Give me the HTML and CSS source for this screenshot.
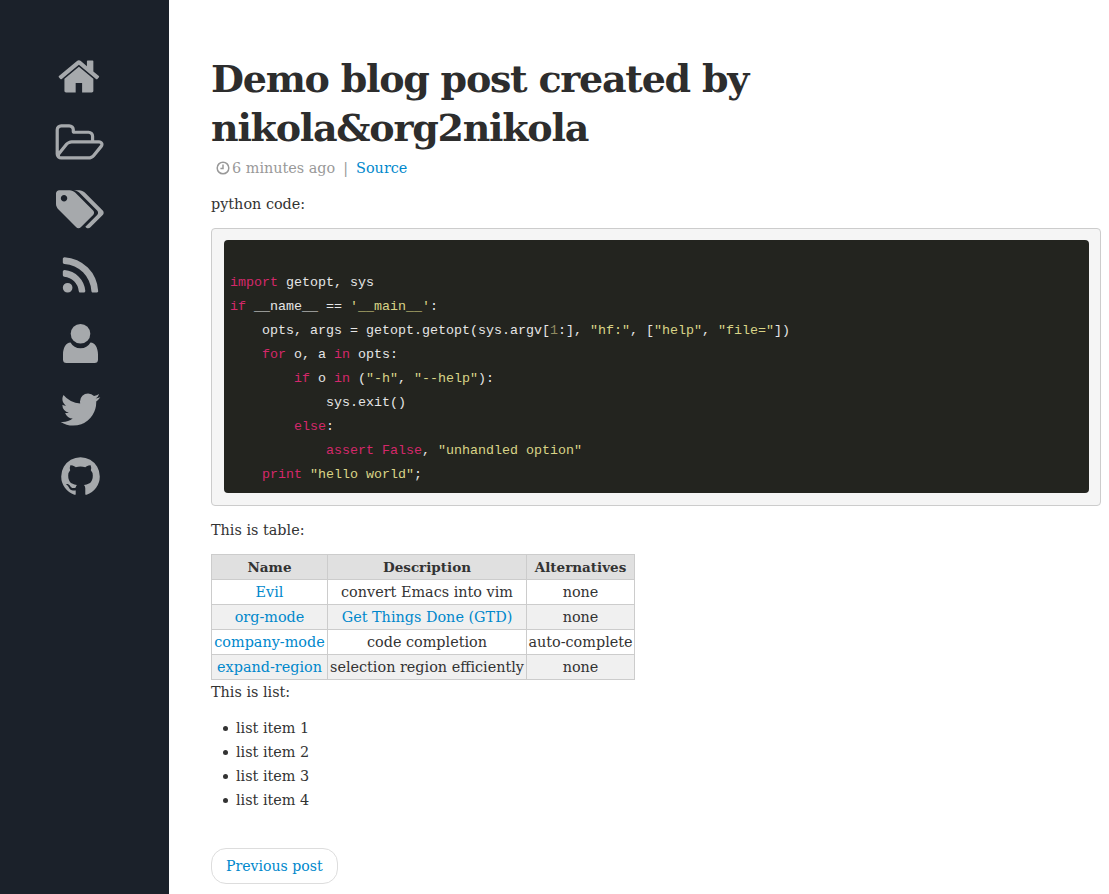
FILE: index.html
```html
<!DOCTYPE html>
<html lang="en">
<head>
<meta charset="utf-8">
<title>Demo blog post created by nikola&amp;org2nikola</title>
<link rel="stylesheet" href="styles.css">
</head>
<body>
<div class="layout">
  <nav class="sidebar">
    <a class="nav-item" href="#"><svg class="icon" viewBox="0 0 1792 1792"><path d="M1408 992v480q0 26-19 45t-45 19h-384v-384h-256v384h-384q-26 0-45-19t-19-45v-480q0-1 .5-3t.5-3l575-474 575 474q1 2 1 6zm223-69l-62 74q-8 9-21 11h-3q-13 0-21-7l-692-577-692 577q-12 8-24 7-13-2-21-11l-62-74q-8-10-7-23.5t11-21.5l719-599q32-26 76-26t76 26l244 204v-195q0-14 9-23t23-9h192q14 0 23 9t9 23v408l219 182q10 8 11 21.5t-7 23.5z"/></svg></a>
    <a class="nav-item" href="#"><svg class="icon" viewBox="0 0 2048 1792"><path d="M1845 931q0-35-53-35h-1088q-40 0-85.5 21.5t-71.5 52.5l-294 363q-18 24-18 40 0 35 53 35h1088q40 0 86-22t71-53l294-363q18-22 18-39zm-1141-163h768v-160q0-40-28-68t-68-28h-576q-40 0-68-28t-28-68v-64q0-40-28-68t-68-28h-320q-40 0-68 28t-28 68v853l256-315q44-53 116-87.5t140-34.5zm1269 163q0 62-46 120l-295 363q-43 53-116 87.5t-140 34.5h-1088q-92 0-158-66t-66-158v-960q0-92 66-158t158-66h320q92 0 158 66t66 158v32h544q92 0 158 66t66 158v160h192q54 0 99 24.5t67 70.5q15 32 15 68z"/></svg></a>
    <a class="nav-item" href="#"><svg class="icon" viewBox="0 0 1920 1792"><path d="M448 448q0-53-37.5-90.5t-90.5-37.5-90.5 37.5-37.5 90.5 37.5 90.5 90.5 37.5 90.5-37.5 37.5-90.5zm1067 576q0 53-37 90l-491 492q-39 37-91 37-53 0-90-37l-715-716q-38-37-64.5-101t-26.5-117v-416q0-52 38-90t90-38h416q53 0 117 26.5t102 64.5l715 714q37 39 37 91zm384 0q0 53-37 90l-491 492q-39 37-91 37-36 0-59-14t-53-45l470-470q37-37 37-90 0-52-37-91l-715-714q-38-38-102-64.5t-117-26.5h224q53 0 117 26.5t102 64.5l715 714q37 39 37 91z"/></svg></a>
    <a class="nav-item" href="#"><svg class="icon" viewBox="0 0 1792 1792"><path d="M576 1344q0 80-56 136t-136 56-136-56-56-136 56-136 136-56 136 56 56 136zm512 123q2 28-17 48-18 21-47 21h-135q-25 0-43-16.5t-20-41.5q-22-229-184.5-391.5t-391.5-184.5q-25-2-41.5-20t-16.5-43v-135q0-29 21-47 17-17 43-17h5q160 13 306 80.5t259 181.5q114 113 181.5 259t80.5 306zm512 2q2 27-18 47-18 20-46 20h-143q-26 0-44.5-17.5t-19.5-42.5q-12-215-101-408.5t-231.5-336-336-231.5-408.5-102q-25-1-42.5-19.5t-17.5-43.5v-143q0-28 20-46 18-18 44-18h3q262 13 501.5 120t425.5 294q187 186 294 425.5t120 501.5z"/></svg></a>
    <a class="nav-item" href="#"><svg class="icon-user" viewBox="0 0 35 39"><circle cx="17.5" cy="9.8" r="9.8"/><path d="M7.5 18.5A11.5 11.5 0 0 0 27.5 18.5C32 18.5 35 24 35 30.5V35.5Q35 39 31.5 39H3.5Q0 39 0 35.5V30.5C0 24 3 18.5 7.5 18.5Z"/></svg></a>
    <a class="nav-item" href="#"><svg class="icon" viewBox="0 0 1792 1792"><path d="M1684 408q-67 98-162 167 1 14 1 42 0 130-38 259.5t-115.5 248.5-184.5 210.5-258 146-323 54.5q-271 0-496-145 35 4 78 4 225 0 401-138-105-2-188-64.5t-114-159.5q33 5 61 5 43 0 85-11-112-23-185.5-111.5t-73.5-205.5v-4q68 38 146 41-66-44-105-115t-39-154q0-88 44-163 121 149 294.5 238.5t371.5 99.5q-8-38-8-74 0-134 94.5-228.5t228.5-94.5q140 0 236 102 109-21 205-78-37 115-142 178 92-10 184-50z"/></svg></a>
    <a class="nav-item" href="#"><svg class="icon" viewBox="0 0 1792 1792"><path d="M896 128q209 0 385.5 103t279.5 279.5 103 385.5q0 251-146.5 451.5t-378.5 277.5q-27 5-40-7t-13-30q0-3 .5-76.5t.5-134.5q0-97-52-142 57-6 102.5-18t94-39 81-66.5 53-105 20.5-150.5q0-119-79-206 37-91-8-204-28-9-81 11t-92 44l-38 24q-93-26-192-26t-192 26q-16-11-42.5-27t-83.5-38.5-85-13.5q-45 113-8 204-79 87-79 206 0 85 20.5 150t52.5 105 80.5 67 94 39 102.5 18q-39 36-49 103-21 10-45 15t-57 5-65.5-21.5-55.5-62.5q-19-32-48.5-52t-49.5-24l-20-3q-21 0-29 4.5t-5 11.5 9 14 13 12l7 5q22 10 43.5 38t31.5 51l10 23q13 38 44 61.5t67 30 69.5 7 55.5-3.5l23-4q0 38 .5 88.5t.5 54.5q0 18-13 30t-40 7q-232-77-378.5-277.5t-146.5-451.5q0-209 103-385.5t279.5-279.5 385.5-103z"/></svg></a>
  </nav>
  <main class="content">
    <h1 class="title">Demo blog post created by<br>nikola&amp;org2nikola</h1>
    <div class="meta">
      <svg class="clock" viewBox="0 0 14 14"><circle cx="7" cy="7" r="5.8"/><path d="M7 3.5V7.6H4.4"/></svg>
      <span class="time">6 minutes ago</span>
      <span class="sep">|</span>
      <a href="#">Source</a>
    </div>
    <p class="para first">python code:</p>
    <div class="code-box">
      <div class="code">
        <div class="line"> </div>
        <div class="line"><span class="k">import</span> getopt, sys</div>
        <div class="line"><span class="k">if</span> __name__ == <span class="s">'__main__'</span>:</div>
        <div class="line">    opts, args = getopt.getopt(sys.argv[<span class="n">1</span>:], <span class="s">"hf:"</span>, [<span class="s">"help"</span>, <span class="s">"file="</span>])</div>
        <div class="line">    <span class="k">for</span> o, a <span class="k">in</span> opts:</div>
        <div class="line">        <span class="k">if</span> o <span class="k">in</span> (<span class="s">"-h"</span>, <span class="s">"--help"</span>):</div>
        <div class="line">            sys.exit()</div>
        <div class="line">        <span class="k">else</span>:</div>
        <div class="line">            <span class="k">assert</span> <span class="k">False</span>, <span class="s">"unhandled option"</span></div>
        <div class="line">    <span class="k">print</span> <span class="s">"hello world"</span>;</div>
      </div>
    </div>
    <p class="para table-label">This is table:</p>
    <table class="data">
      <colgroup><col class="c1"><col class="c2"><col class="c3"></colgroup>
      <thead><tr><th>Name</th><th>Description</th><th>Alternatives</th></tr></thead>
      <tbody>
        <tr><td><a href="#">Evil</a></td><td>convert Emacs into vim</td><td>none</td></tr>
        <tr><td><a href="#">org-mode</a></td><td><a href="#">Get Things Done (GTD)</a></td><td>none</td></tr>
        <tr><td><a href="#">company-mode</a></td><td>code completion</td><td>auto-complete</td></tr>
        <tr><td><a href="#">expand-region</a></td><td>selection region efficiently</td><td>none</td></tr>
      </tbody>
    </table>
    <p class="para list-label">This is list:</p>
    <ul class="list">
      <li>list item 1</li>
      <li>list item 2</li>
      <li>list item 3</li>
      <li>list item 4</li>
    </ul>
    <a class="pager" href="#">Previous post</a>
  </main>
</div>
</body>
</html>
```
FILE: styles.css
```css
* { box-sizing: border-box; }
html, body { margin: 0; padding: 0; background: #fff; }
body {
  font-family: "DejaVu Serif", serif;
  font-size: 14.4px;
  line-height: 24px;
  color: #333;
  height: 894px;
  overflow: hidden;
}
a { color: #0088cc; text-decoration: none; }
.layout { display: flex; height: 894px; }
.sidebar {
  width: 169px;
  flex: none;
  background: #1b212a;
  display: flex;
  flex-direction: column;
  align-items: center;
  padding: 43px 9px 0 0;
}
.nav-item { height: 66.7px; display: flex; align-items: center; justify-content: center; }
.icon { height: 45px; width: auto; fill: #a6a9ac; display: block; }
.icon-user { width: 35px; height: 39px; fill: #a6a9ac; display: block; }
.content { flex: 1; padding: 54px 8px 0 42px; min-width: 0; }
.title {
  margin: 0;
  font-size: 38px;
  line-height: 49px;
  font-weight: 700;
  letter-spacing: -1.25px;
  color: #2d2d2d;
}
.meta { margin-top: 4px; padding-left: 5px; height: 24px; color: #999; display: flex; align-items: center; }
.clock { width: 14px; height: 14px; fill: none; stroke: #999; stroke-width: 1.5; margin-right: 2px; }
.sep { margin: 0 8px; }
.para { margin: 0; }
.first { margin-top: 12px; }
.code-box {
  margin-top: 12px;
  height: 278px;
  padding: 11px 11px 12px 12px;
  background: #f5f5f5;
  border: 1px solid #ccc;
  border-radius: 4px;
}
.code {
  height: 253px;
  padding: 7px 6px 6px;
  background: #23241f;
  border-radius: 4px;
  color: #e6e6e6;
  font-family: "Liberation Mono", monospace;
  font-size: 13.33px;
  line-height: 24px;
  overflow: hidden;
}
.line { white-space: pre; height: 24px; }
.k { color: #d4286a; }
.s { color: #d9d487; }
.n { color: #8f8a60; }
.table-label { margin-top: 12px; }
.data {
  margin-top: 12px;
  border-collapse: collapse;
  table-layout: fixed;
  width: 423px;
  text-align: center;
  line-height: 24px;
  border: 1px solid #ccc;
}
.c1 { width: 116px; }
.c2 { width: 199px; }
.c3 { width: 108px; }
.data th, .data td { border: 1px solid #ccc; padding: 0; height: 25px; white-space: nowrap; overflow: hidden; }
.data th { background: #e0e0e0; font-weight: 700; font-size: 13.5px; }
.data tbody tr:nth-child(even) { background: #f0f0f0; }
.list-label { margin-top: 0; }
.list { margin: 12px 0 0; padding: 0 0 0 12px; list-style: none; }
.list li { display: flex; align-items: center; }
.list li::before { content: ""; width: 5px; height: 5px; border-radius: 50%; background: #333; margin-right: 8px; }
.pager {
  display: inline-block;
  margin-top: 36px;
  height: 36px;
  line-height: 34px;
  padding: 0 14px;
  border: 1px solid #ddd;
  border-radius: 15px;
  background: #fff;
  font-size: 14.1px;
}
```
